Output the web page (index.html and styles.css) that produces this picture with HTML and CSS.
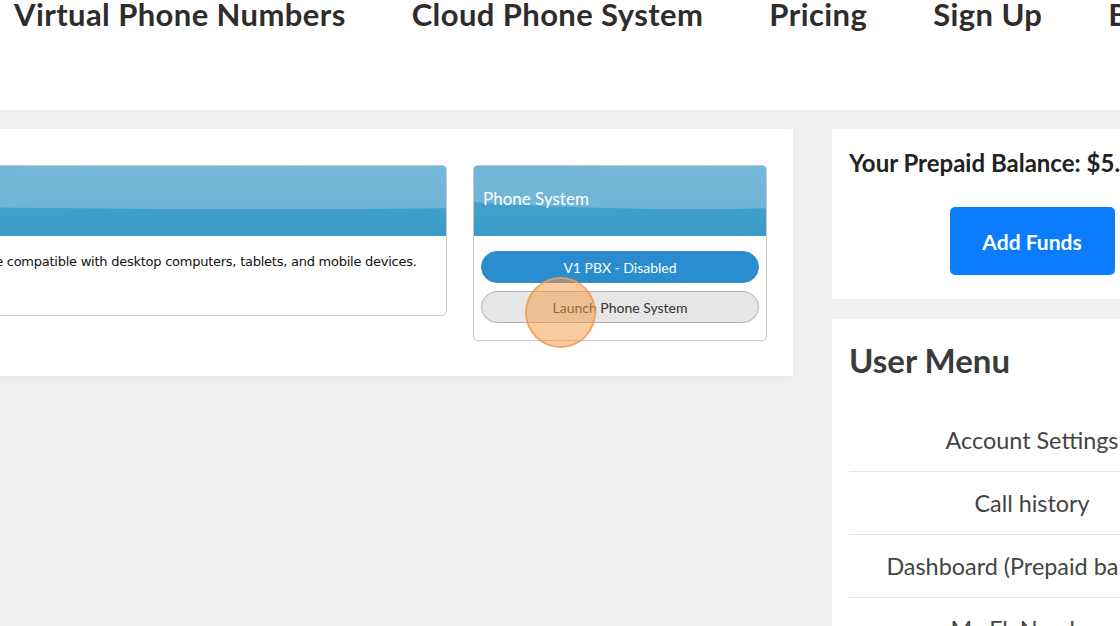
FILE: index.html
```html
<!DOCTYPE html>
<html lang="en">
<head>
<meta charset="utf-8">
<title>Phone System</title>
<link rel="stylesheet" href="styles.css">
</head>
<body>
<header class="topbar">
  <nav class="nav">
    <a class="nav-link">Virtual Phone Numbers</a>
    <a class="nav-link">Cloud Phone System</a>
    <a class="nav-link">Pricing</a>
    <a class="nav-link">Sign Up</a>
    <a class="nav-link">Blog</a>
  </nav>
</header>
<main class="main">
  <section class="content-panel">
    <div class="card card-info">
      <div class="card-head"></div>
      <div class="card-body">
        <p class="card-text">Our web-based phone systems are compatible with desktop computers, tablets, and mobile devices.</p>
      </div>
    </div>
    <div class="card card-phone">
      <div class="card-head"><span class="card-title">Phone System</span></div>
      <div class="card-body phone-body">
        <button class="pill pill-blue">V1 PBX - Disabled</button>
        <button class="pill pill-gray">Launch Phone System</button>
      </div>
    </div>
  </section>
  <aside class="sidebar">
    <div class="panel balance">
      <h2 class="balance-title">Your Prepaid Balance: $5.20</h2>
      <button class="add-funds">Add Funds</button>
    </div>
    <div class="panel user-menu">
      <h2 class="menu-title">User Menu</h2>
      <ul class="menu-list">
        <li class="menu-item">Account Settings</li>
        <li class="menu-item">Call history</li>
        <li class="menu-item">Dashboard (Prepaid balance)</li>
        <li class="menu-item">My FlyNumbers</li>
      </ul>
    </div>
  </aside>
</main>
<div class="cursor"></div>
</body>
</html>
```
FILE: styles.css
```css
* { box-sizing: border-box; }
html, body { margin: 0; padding: 0; }
body {
  width: 1120px;
  height: 626px;
  overflow: hidden;
  background: #f0f1f3;
  font-family: "Lato", "Liberation Sans", sans-serif;
  position: relative;
}
.topbar {
  height: 110px;
  background: #ffffff;
}
.nav {
  display: flex;
  gap: 66px;
  padding-left: 14px;
  white-space: nowrap;
}
.nav-link {
  font-size: 31px;
  line-height: 28px;
  letter-spacing: 0.4px;
  font-weight: 700;
  color: #2f2c2c;
}
.main {
  display: flex;
  gap: 39px;
  padding-top: 19px;
  margin-left: -320px;
  width: 1560px;
  align-items: flex-start;
}
.content-panel {
  width: 1113px;
  flex: none;
  background: #ffffff;
  display: flex;
  gap: 26px;
  align-items: flex-start;
  padding: 36px 26px 35px;
  box-shadow: 0 4px 14px rgba(0,0,0,0.04);
}
.card {
  border: 1px solid #c9c9c9;
  border-radius: 5px;
  background: #fff;
  overflow: hidden;
}
.card-info { flex: 1; }
.card-phone { width: 294px; flex: none; }
.card-head {
  height: 70px;
  display: flex;
  align-items: center;
  padding-left: 9px;
  background:
    radial-gradient(ellipse 140% 62% at 75% 0%, #76b9da 0%, #70b5d7 98%, rgba(0,0,0,0) 100%),
    linear-gradient(#4da7d0, #3a9bc8);
}
.card-title {
  color: #ffffff;
  font-size: 17px;
  margin-top: -5px;
}
.card-info .card-body {
  height: 79px;
  padding: 17px 11px 0 77px;
}
.card-text {
  margin: 0;
  font-family: "DejaVu Sans", Verdana, sans-serif;
  font-size: 13px;
  line-height: 18px;
  color: #111;
  white-space: nowrap;
  letter-spacing: -0.25px;
}
.phone-body {
  display: flex;
  flex-direction: column;
  gap: 8px;
  padding: 15px 7px 17px;
}
.pill {
  height: 32px;
  border-radius: 16px;
  font-family: "Lato", sans-serif;
  font-size: 14px;
  width: 100%;
  cursor: pointer;
}
.pill-blue {
  background: #2a8dd0;
  border: 1px solid #3a8cc0;
  color: #ffffff;
}
.pill-gray {
  background: #e6e6e6;
  border: 1px solid #b3b3b3;
  color: #333;
}
.sidebar {
  width: 400px;
  flex: none;
  display: flex;
  flex-direction: column;
  gap: 20px;
}
.panel {
  background: #ffffff;
  padding: 0 17px;
}
.balance {
  padding-top: 20px;
  padding-bottom: 24px;
  text-align: center;
}
.balance-title {
  margin: 0 0 30px;
  font-size: 24px;
  line-height: 28px;
  font-weight: 700;
  color: #222;
  text-align: left;
  white-space: nowrap;
}
.add-funds {
  width: 165px;
  height: 68px;
  border: none;
  border-radius: 5px;
  background: #0b7cfe;
  color: #ffffff;
  font-family: "Lato", sans-serif;
  font-size: 21px;
  font-weight: 700;
}
.user-menu {
  padding-top: 22px;
  height: 340px;
}
.menu-title {
  margin: 0 0 30px;
  font-size: 33px;
  line-height: 38px;
  font-weight: 700;
  color: #3b3b3b;
}
.menu-list {
  list-style: none;
  margin: 0;
  padding: 0;
}
.menu-item {
  height: 63px;
  line-height: 62px;
  border-bottom: 1px solid #e3e3e3;
  text-align: center;
  font-size: 23.4px;
  color: #444;
  white-space: nowrap;
}
.cursor {
  position: absolute;
  left: 525px;
  top: 277px;
  width: 71px;
  height: 71px;
  border-radius: 50%;
  background: rgba(246, 152, 64, 0.5);
  border: 2px solid rgba(240, 156, 80, 0.8);
}
```
